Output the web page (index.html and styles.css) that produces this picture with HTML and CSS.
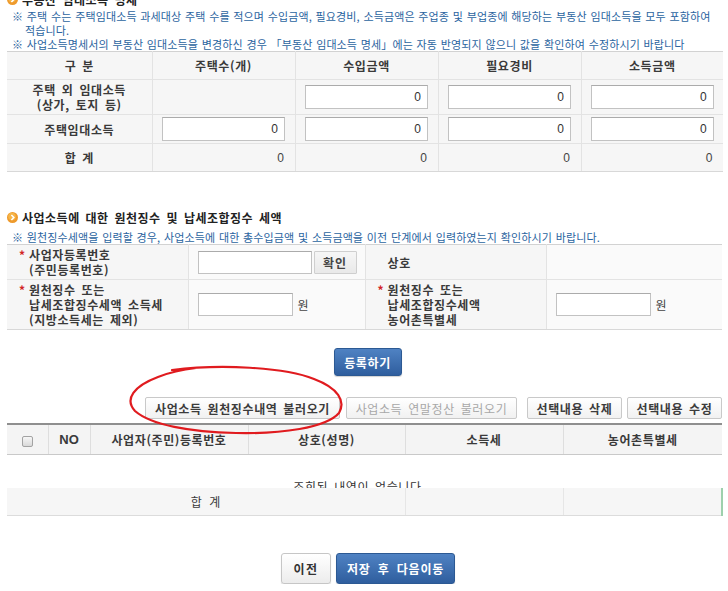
FILE: index.html
```html
<!DOCTYPE html>
<html lang="ko">
<head>
<meta charset="utf-8">
<title>부동산 임대소득 명세</title>
<link rel="stylesheet" href="styles.css">
</head>
<body>
<div class="page">
  <h3 class="sec-title sec-title--cut">
    <svg class="ico" width="11" height="11" viewBox="0 0 11 11"><circle cx="5.5" cy="5.5" r="5.5" fill="#ee9a2c"/><circle cx="5" cy="4.5" r="3.8" fill="#f6b547"/><path d="M4.4 3 L6.8 5.5 L4.4 8" stroke="#fff" stroke-width="1.6" fill="none"/></svg>
    부동산 임대소득 명세
  </h3>
  <ul class="notes notes--first">
    <li>※ 주택 수는 주택임대소득 과세대상 주택 수를 적으며 수입금액, 필요경비, 소득금액은 주업종 및 부업종에 해당하는 부동산 임대소득을 모두 포함하여 적습니다.</li>
    <li>※ 사업소득명세서의 부동산 임대소득을 변경하신 경우 「부동산 임대소득 명세」에는 자동 반영되지 않으니 값을 확인하여 수정하시기 바랍니다</li>
  </ul>

  <table class="grid rent">
    <colgroup><col class="c145"><col class="c143"><col class="c143"><col class="c143"><col class="c141"></colgroup>
    <tr class="rent-head">
      <th>구 분</th><th>주택수(개)</th><th>수입금액</th><th>필요경비</th><th>소득금액</th>
    </tr>
    <tr class="rent-tall">
      <th>주택 외 임대소득<br>(상가, 토지 등)</th>
      <td></td>
      <td><input class="num" value="0"></td>
      <td><input class="num" value="0"></td>
      <td><input class="num" value="0"></td>
    </tr>
    <tr class="rent-row">
      <th>주택임대소득</th>
      <td><input class="num" value="0"></td>
      <td><input class="num" value="0"></td>
      <td><input class="num" value="0"></td>
      <td><input class="num" value="0"></td>
    </tr>
    <tr class="rent-sum">
      <th>합 계</th>
      <td class="val">0</td><td class="val">0</td><td class="val">0</td><td class="val">0</td>
    </tr>
  </table>

  <h3 class="sec-title sec-two">
    <svg class="ico" width="11" height="11" viewBox="0 0 11 11"><circle cx="5.5" cy="5.5" r="5.5" fill="#ee9a2c"/><circle cx="5" cy="4.5" r="3.8" fill="#f6b547"/><path d="M4.4 3 L6.8 5.5 L4.4 8" stroke="#fff" stroke-width="1.6" fill="none"/></svg>
    사업소득에 대한 원천징수 및 납세조합징수 세액
  </h3>
  <ul class="notes notes--second">
    <li>※ 원천징수세액을 입력할 경우, 사업소득에 대한 총수입금액 및 소득금액을 이전 단계에서 입력하였는지 확인하시기 바랍니다.</li>
  </ul>

  <table class="grid wh">
    <colgroup><col class="c181"><col class="c177"><col class="c181"><col class="c176"></colgroup>
    <tr class="wh-r1">
      <th><span class="req">*</span><span class="lbl">사업자등록번호<br>(주민등록번호)</span></th>
      <td><input class="txt txt--wide"><button class="btn-chk">확인</button></td>
      <th><span class="req req--none"></span><span class="lbl">상호</span></th>
      <td></td>
    </tr>
    <tr class="wh-r2">
      <th><span class="req">*</span><span class="lbl">원천징수 또는<br>납세조합징수세액 소득세<br>(지방소득세는 제외)</span></th>
      <td><input class="txt"><span class="won">원</span></td>
      <th><span class="req">*</span><span class="lbl">원천징수 또는<br>납세조합징수세액<br>농어촌특별세</span></th>
      <td><input class="txt"><span class="won">원</span></td>
    </tr>
  </table>

  <div class="reg-row"><button class="btn-blue btn-reg">등록하기</button></div>

  <div class="btn-row">
    <button class="btn-gray b1">사업소득 원천징수내역 불러오기</button>
    <button class="btn-gray btn-dis b2">사업소득 연말정산 불러오기</button>
    <button class="btn-gray b3">선택내용 삭제</button>
    <button class="btn-gray b4">선택내용 수정</button>
  </div>

  <table class="list">
    <colgroup><col class="c41"><col class="c42"><col class="c158"><col class="c157"><col class="c158"><col class="c159"></colgroup>
    <tr class="list-head">
      <th><span class="chk"></span></th>
      <th class="no">NO</th>
      <th>사업자(주민)등록번호</th>
      <th>상호(성명)</th>
      <th>소득세</th>
      <th>농어촌특별세</th>
    </tr>
    <tr>
      <td colspan="6" class="empty-cell"><div class="empty"><p>조회된 내역이 없습니다</p></div></td>
    </tr>
    <tr class="list-sum">
      <td colspan="4">합 계</td>
      <td></td>
      <td class="last"></td>
    </tr>
  </table>

  <div class="foot">
    <button class="btn-white">이전</button>
    <button class="btn-blue btn-next">저장 후 다음이동</button>
  </div>
</div>

<svg class="annot" width="728" height="591" viewBox="0 0 728 591">
  <path d="M172 370 C 220 364, 284 367, 314 379 C 338 388, 346 401, 339 413 C 326 428, 281 434, 236 433 C 190 432, 151 425, 135 411 C 124 399, 134 386, 158 377 C 168 373, 178 370, 196 368" fill="none" stroke="#e01b1f" stroke-width="2.2" stroke-linecap="round" stroke-linejoin="round"/>
</svg>
</body>
</html>
```

FILE: styles.css
```css
* { box-sizing: border-box; }

body {
  margin: 0;
  font-family: "Noto Sans CJK KR", "Noto Sans", sans-serif;
  font-size: 12px;
  color: #333;
  background: #fff;
}

.page {
  width: 728px;
  padding: 0 6px 0 7px;
  margin-top: -9px;
}

.sec-title {
  display: flex;
  align-items: center;
  gap: 4px;
  height: 16px;
  margin: 0;
  font-size: 12px;
  font-weight: bold;
  color: #222;
  letter-spacing: 0.5px;
  word-spacing: 2px;
}

.ico { flex: none; }

.sec-two { margin-top: 37px; }

.notes {
  list-style: none;
  margin: 2px 0 0;
  padding: 0 0 0 5px;
  font-size: 11px;
  line-height: 14px;
  color: #2b64a0;
  letter-spacing: 0.12px;
  word-spacing: 0.5px;
}

.notes li {
  padding-left: 13px;
  text-indent: -13px;
}

.notes--second { margin-top: 5px; }

/* generic grid tables */
.grid {
  width: 715px;
  border-collapse: collapse;
  table-layout: fixed;
}

.grid th,
.grid td {
  padding: 0;
  border: 1px solid #e3e3e3;
  background: #f6f6f6;
  text-align: center;
  vertical-align: middle;
  letter-spacing: 0.6px;
  word-spacing: 2px;
}

.grid tr > :first-child { border-left: none; }
.grid tr > :last-child { border-right: none; }
.grid tr:first-child > * { border-top: 1px solid #d2d2d2; }
.grid tr:last-child > * { border-bottom: 1px solid #d8d8d8; }

.grid th {
  font-weight: bold;
  color: #3a3a3a;
  line-height: 15px;
}

.c145 { width: 145px; }
.c143 { width: 143px; }
.c141 { width: 142px; }
.c181 { width: 181px; }
.c177 { width: 177px; }
.c176 { width: 176px; }
.c41 { width: 41px; }
.c42 { width: 42px; }
.c157 { width: 157px; }
.c158 { width: 158px; }
.c159 { width: 159px; }

.rent-head > * { height: 28px; }
.rent-tall > * { height: 35px; }
.rent-row > * { height: 29px; }
.rent-sum > * { height: 28px; }

.num {
  display: block;
  margin: 0 auto;
  width: 123px;
  height: 24px;
  border: 1px solid #c2c2c2;
  border-top-color: #ababab;
  background: #fff;
  text-align: right;
  padding: 0 6px 0 0;
  font-family: "Liberation Sans", "DejaVu Sans", sans-serif;
  font-size: 12px;
  color: #333;
  border-radius: 0;
  outline: none;
}

.rent .val {
  text-align: right;
  padding-right: 10px;
  font-family: "Liberation Sans", sans-serif;
  color: #444;
}

/* withholding table */
.wh th {
  text-align: left;
  padding-left: 12px;
  white-space: nowrap;
}

.wh th > span { display: inline-block; vertical-align: top; }

.req {
  width: 10px;
  color: #d22525;
  font-size: 12px;
  line-height: 15px;
}

.wh td {
  text-align: left;
  padding-left: 9px;
  background: #fafafa;
}

.wh-r1 > * { height: 35px; }
.wh-r2 > * { height: 50px; }

.txt {
  width: 95px;
  height: 23px;
  border: 1px solid #c2c2c2;
  border-top-color: #ababab;
  background: #fff;
  vertical-align: middle;
  padding: 0;
  border-radius: 0;
}

.txt--wide { width: 114px; }

.btn-chk {
  width: 43px;
  height: 23px;
  margin-left: 2px;
  vertical-align: middle;
  border: 1px solid #cfcfcf;
  border-radius: 1px;
  background: linear-gradient(#f6f6f6, #e9e9e9);
  font-family: inherit;
  font-size: 12px;
  font-weight: bold;
  color: #444;
  padding: 0;
  letter-spacing: 1px;
}

.won {
  margin-left: 5px;
  vertical-align: middle;
  color: #444;
}

/* buttons */
button { font-family: inherit; cursor: default; }

.reg-row {
  display: flex;
  justify-content: center;
  padding-left: 6px;
  margin-top: 18px;
}

.btn-blue {
  height: 28px;
  border: 1px solid #2c5993;
  border-radius: 3px;
  background: linear-gradient(#4f82c3, #2f5e9e);
  color: #fff;
  font-size: 12px;
  font-weight: bold;
  padding: 0;
  letter-spacing: 0.6px;
  word-spacing: 3px;
  box-shadow: 0 1px 1px rgba(0, 0, 0, 0.18);
}

.btn-reg { width: 68px; }

.btn-row {
  display: flex;
  justify-content: flex-end;
  margin-top: 21px;
  height: 22px;
}

.btn-gray {
  height: 22px;
  border: 1px solid #c9c9c9;
  border-radius: 2px;
  background: linear-gradient(#ffffff, #f1f1f1);
  font-size: 12px;
  font-weight: bold;
  color: #3c3c3c;
  padding: 0;
  letter-spacing: 0.6px;
  word-spacing: 2px;
}

.btn-dis { color: #a8a8a8; font-weight: normal; }

.b1 { width: 195px; }
.b2 { width: 171px; margin-left: 6px; }
.b3 { width: 95px; margin-left: 10px; }
.b4 { width: 95px; margin-left: 5px; }

/* list table */
.list {
  width: 715px;
  margin-top: 4px;
  border-collapse: collapse;
  table-layout: fixed;
}

.list-head > th {
  height: 30px;
  padding: 0;
  background: #f4f4f4;
  border-top: 2px solid #8f8f8f;
  border-bottom: 1px solid #c9c9c9;
  border-left: 1px solid #dedede;
  font-weight: bold;
  color: #3a3a3a;
  letter-spacing: 0.6px;
  word-spacing: 2px;
}

.list-head > th:first-child { border-left: none; }

.list-head .no {
  font-family: "Liberation Sans", sans-serif;
  font-size: 13px;
  letter-spacing: 0;
}

.chk {
  display: inline-block;
  width: 11px;
  height: 11px;
  border: 1px solid #a3a3a3;
  border-radius: 2px;
  background: linear-gradient(#f7f7f7, #d9d9d9);
  vertical-align: middle;
}

.empty-cell { padding: 0; }

.empty {
  height: 33px;
  overflow: hidden;
}

.empty p {
  margin: 0;
  padding: 25px 14px 0 0;
  line-height: 14px;
  text-align: center;
  color: #333;
  letter-spacing: 0.6px;
  word-spacing: 2px;
}

.list-sum > td {
  height: 28px;
  padding: 0;
  background: #f6f6f6;
  border-left: 1px solid #e6e6e6;
  border-bottom: 1px solid #dcdcdc;
  text-align: center;
  color: #3a3a3a;
  letter-spacing: 0.6px;
  word-spacing: 3px;
}

.list-sum > td:first-child { border-left: none; }
.list-sum > td.last { border-right: 2px solid #9dd0ac; }

/* footer */
.foot {
  display: flex;
  justify-content: center;
  gap: 5px;
  margin-top: 37px;
  padding-left: 7px;
}

.btn-white {
  width: 50px;
  height: 31px;
  border: 1px solid #c6c6c6;
  border-radius: 3px;
  background: linear-gradient(#ffffff, #ececec);
  color: #333;
  font-size: 12px;
  font-weight: bold;
  padding: 0;
  letter-spacing: 1.5px;
  box-shadow: 0 1px 1px rgba(0, 0, 0, 0.15);
}

.btn-next {
  width: 119px;
  height: 31px;
  letter-spacing: 0.8px;
}

.annot {
  position: absolute;
  left: 0;
  top: 0;
  pointer-events: none;
}
```
